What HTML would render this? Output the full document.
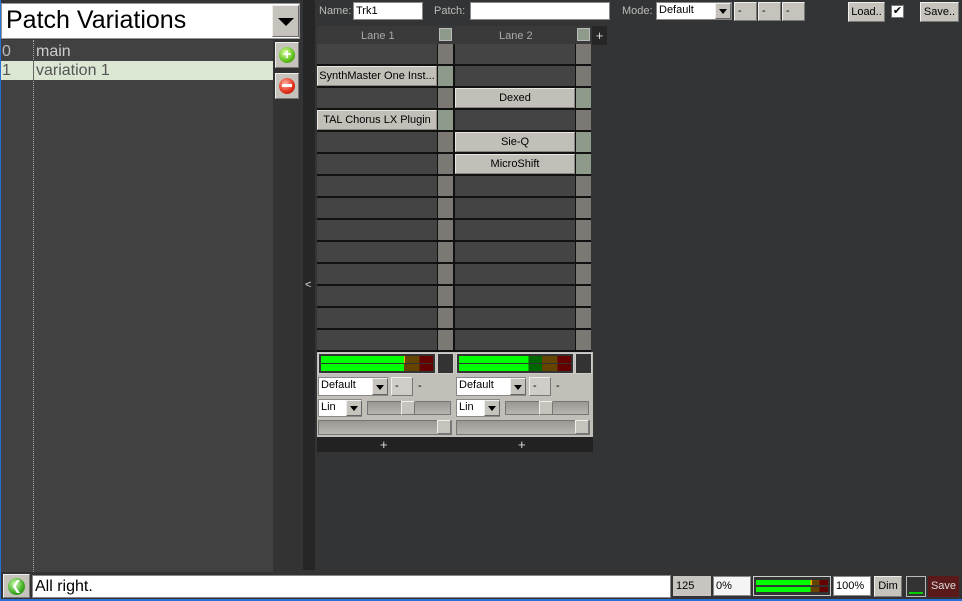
<!DOCTYPE html><html><head><style>
*{margin:0;padding:0;box-sizing:border-box}
body{width:962px;height:601px;background:#333435;font-family:"Liberation Sans","DejaVu Sans",sans-serif;position:relative;overflow:hidden;font-size:11px}
.a{position:absolute}
.slot{position:absolute;height:20px;background:#444;}
.side{position:absolute;width:15px;height:20px;background:#7c7874}
.sideg{background:#8e9b8a}
.plug{position:absolute;height:20px;background:#c2bfb9;border:1px solid #e8e6e0;border-right-color:#8a8782;border-bottom-color:#8a8782;color:#000;text-align:center;line-height:18px;font-size:11px;white-space:nowrap;overflow:hidden}
.lbl{color:#bbb;font-size:11px}
.inp{background:#fff;border:1px solid #888;color:#000;font-size:11px;padding-left:2px;line-height:16px}
.btn{background:#c6c3bd;border:1px solid #eee;border-right-color:#777;border-bottom-color:#777;color:#000;font-size:11px;text-align:center}
.dd{background:#c6c3bd;border:1px solid #eee;border-right-color:#666;border-bottom-color:#666}
.dd:after{content:"";position:absolute;left:50%;top:50%;margin:-2px 0 0 -4px;border:4px solid transparent;border-top:5px solid #000;border-bottom:0}
.big:after{margin:-3px 0 0 -8px;border-width:8px;border-top-width:8px;border-bottom:0}
</style></head><body>
<div class="a" style="left:0;top:0;width:1px;height:601px;background:#2a6fd6"></div>
<div class="a" style="left:0;top:599px;width:962px;height:2px;background:#2a6fd6"></div>
<div class="a" style="left:1px;top:40px;width:272px;height:532px;background:#414141"></div>
<div class="a" style="left:33px;top:40px;width:0;height:532px;border-left:1px dotted #aaa"></div>
<div class="a" style="left:273px;top:40px;width:27px;height:532px;background:#333"></div>
<div class="a" style="left:303px;top:0;width:12px;height:570px;background:#262626"></div>
<div class="a" style="left:305px;top:279px;color:#ddd;font-size:11px">&lt;</div>
<div class="a" style="left:1px;top:3px;width:299px;height:36px;background:#fff;border:1px solid #999"></div>
<div class="a" style="left:6px;top:6px;font-size:25px;color:#000">Patch Variations</div>
<div class="a dd big" style="left:272px;top:5px;width:27px;height:32px"></div>
<div class="a" style="left:2px;top:43px;font-size:16px;color:#bbb">0</div>
<div class="a" style="left:36px;top:43px;font-size:16px;color:#ccc">main</div>
<div class="a" style="left:1px;top:61px;width:272px;height:19px;background:#dbe6d3"></div>
<div class="a" style="left:33px;top:61px;width:1px;height:19px;background:#666"></div>
<div class="a" style="left:2px;top:62px;font-size:16px;color:#555">1</div>
<div class="a" style="left:36px;top:62px;font-size:16px;color:#555">variation 1</div>
<div class="a btn" style="left:275px;top:42px;width:24px;height:26px"><div class="a" style="left:3px;top:4px;width:16px;height:16px;border-radius:50%;background:radial-gradient(circle at 40% 35%,#dfffa0,#5cbf1a 60%,#2e7a0a);color:#fff;font-weight:bold;font-size:15px;line-height:15px;text-align:center">+</div></div>
<div class="a btn" style="left:275px;top:73px;width:24px;height:26px"><div class="a" style="left:3px;top:4px;width:16px;height:16px;border-radius:50%;background:radial-gradient(circle at 40% 35%,#ffb0a0,#e0301a 60%,#901005);"><div class="a" style="left:3px;top:6px;width:10px;height:3px;background:#fff"></div></div></div>
<div class="a lbl" style="left:319px;top:5px">Name:</div>
<div class="a inp" style="left:353px;top:2px;width:70px;height:18px">Trk1</div>
<div class="a lbl" style="left:434px;top:5px">Patch:</div>
<div class="a inp" style="left:470px;top:2px;width:140px;height:18px"></div>
<div class="a lbl" style="left:622px;top:5px">Mode:</div>
<div class="a inp" style="left:656px;top:2px;width:76px;height:18px;line-height:14px">Default</div>
<div class="a dd" style="left:715px;top:3px;width:16px;height:16px"></div>
<div class="a btn" style="left:734px;top:2px;width:23px;height:19px;text-align:left;padding-left:3px;line-height:17px">-</div>
<div class="a btn" style="left:758px;top:2px;width:23px;height:19px;text-align:left;padding-left:3px;line-height:17px">-</div>
<div class="a btn" style="left:782px;top:2px;width:23px;height:19px;text-align:left;padding-left:3px;line-height:17px">-</div>
<div class="a btn" style="left:848px;top:2px;width:37px;height:20px;line-height:18px">Load..</div>
<div class="a" style="left:891px;top:5px;width:13px;height:13px;background:#fff;border:1px solid #777;font-size:11px;line-height:11px;text-align:center">✔</div>
<div class="a btn" style="left:920px;top:2px;width:39px;height:20px;line-height:18px">Save..</div>
<div class="a" style="left:317px;top:26px;width:274px;height:18px;background:#3a3a3a"></div>
<div class="a lbl" style="left:361px;top:30px;color:#aaa">Lane 1</div>
<div class="a lbl" style="left:499px;top:30px;color:#aaa">Lane 2</div>
<div class="a" style="left:439px;top:28px;width:13px;height:13px;background:#8e9b8a;border:1px solid #bbb"></div>
<div class="a" style="left:577px;top:28px;width:13px;height:13px;background:#8e9b8a;border:1px solid #bbb"></div>
<div class="a" style="left:592px;top:26px;width:15px;height:19px;background:#262626;color:#ddd;font-size:13px;text-align:center;line-height:19px">+</div>
<div class="a" style="left:317px;top:44px;width:274px;height:308px;background:#111"></div>
<div id="rows"></div>
<script>
var h='';for(var i=0;i<14;i++){var y=44+i*22;
h+='<div class="slot" style="left:317px;top:'+y+'px;width:120px"></div><div class="side'+((i==1||i==3)?' sideg':'')+'" style="left:438px;top:'+y+'px"></div>';
h+='<div class="slot" style="left:455px;top:'+y+'px;width:120px"></div><div class="side'+((i==2||i==4||i==5)?' sideg':'')+'" style="left:576px;top:'+y+'px"></div>';}
document.getElementById('rows').innerHTML=h;
</script>
<div class="plug" style="left:317px;top:66px;width:120px">SynthMaster One Inst...</div>
<div class="plug" style="left:317px;top:110px;width:120px">TAL Chorus LX Plugin</div>
<div class="plug" style="left:455px;top:88px;width:120px">Dexed</div>
<div class="plug" style="left:455px;top:132px;width:120px">Sie-Q</div>
<div class="plug" style="left:455px;top:154px;width:120px">MicroShift</div>
<div class="a" style="left:317px;top:352px;width:276px;height:85px;background:#c2bfb9"></div>
<div class="a" style="left:318px;top:353px;width:118px;height:21px;background:#333;border:1px solid #ccc"></div>
<div class="a" style="left:321px;top:356px;width:112px;height:7px;background:linear-gradient(90deg,#0f0 0 74%,#fa0 74% 75%,#654400 75% 88%,#600 88%)"></div>
<div class="a" style="left:321px;top:364px;width:112px;height:7px;background:linear-gradient(90deg,#0f0 0 74%,#654400 74% 88%,#600 88%)"></div>
<div class="a" style="left:437px;top:353px;width:17px;height:21px;background:#333;border:1px solid #ccc"></div>
<div class="a" style="left:456px;top:353px;width:118px;height:21px;background:#333;border:1px solid #ccc"></div>
<div class="a" style="left:459px;top:356px;width:112px;height:7px;background:linear-gradient(90deg,#0f0 0 62%,#060 62% 74%,#654400 74% 88%,#600 88%)"></div>
<div class="a" style="left:459px;top:364px;width:112px;height:7px;background:linear-gradient(90deg,#0f0 0 62%,#060 62% 74%,#654400 74% 88%,#600 88%)"></div>
<div class="a" style="left:575px;top:353px;width:17px;height:21px;background:#333;border:1px solid #ccc"></div>
<div class="a inp" style="left:318px;top:377px;width:70px;height:19px;line-height:15px">Default</div>
<div class="a dd" style="left:372px;top:378px;width:16px;height:17px"></div>
<div class="a btn" style="left:391px;top:377px;width:22px;height:19px;text-align:left;padding-left:3px;background:#d0cdc8;line-height:17px">-</div>
<div class="a" style="left:418px;top:380px">-</div>
<div class="a inp" style="left:456px;top:377px;width:70px;height:19px;line-height:15px">Default</div>
<div class="a dd" style="left:510px;top:378px;width:16px;height:17px"></div>
<div class="a btn" style="left:529px;top:377px;width:22px;height:19px;text-align:left;padding-left:3px;background:#d0cdc8;line-height:17px">-</div>
<div class="a" style="left:556px;top:380px">-</div>
<div class="a inp" style="left:318px;top:399px;width:44px;height:18px;line-height:14px">Lin</div>
<div class="a dd" style="left:346px;top:400px;width:16px;height:16px"></div>
<div class="a" style="left:367px;top:401px;width:84px;height:14px;background:linear-gradient(#9a9893,#b8b5b0);border:1px solid #777"></div>
<div class="a btn" style="left:401px;top:401px;width:14px;height:14px"></div>
<div class="a inp" style="left:456px;top:399px;width:44px;height:18px;line-height:14px">Lin</div>
<div class="a dd" style="left:484px;top:400px;width:16px;height:16px"></div>
<div class="a" style="left:505px;top:401px;width:84px;height:14px;background:linear-gradient(#9a9893,#b8b5b0);border:1px solid #777"></div>
<div class="a btn" style="left:539px;top:401px;width:14px;height:14px"></div>
<div class="a" style="left:318px;top:420px;width:134px;height:15px;background:linear-gradient(#9a9893,#b8b5b0);border:1px solid #777"></div>
<div class="a btn" style="left:437px;top:420px;width:14px;height:14px"></div>
<div class="a" style="left:456px;top:420px;width:134px;height:15px;background:linear-gradient(#9a9893,#b8b5b0);border:1px solid #777"></div>
<div class="a btn" style="left:575px;top:420px;width:14px;height:14px"></div>
<div class="a" style="left:317px;top:437px;width:276px;height:15px;background:#222;color:#ddd;font-size:13px;line-height:15px"><span class="a" style="left:63px">+</span><span class="a" style="left:201px">+</span></div>
<div class="a" style="left:1px;top:572px;width:961px;height:27px;background:#333"></div>
<div class="a btn" style="left:3px;top:574px;width:27px;height:24px"><div class="a" style="left:4px;top:3px;width:17px;height:17px;border-radius:50%;background:radial-gradient(circle at 40% 35%,#cfffb0,#3caa20 60%,#1e6a08);color:#fff;font-weight:bold;font-size:13px;line-height:16px;text-align:center">&#x276E;</div></div>
<div class="a" style="left:32px;top:575px;width:639px;height:23px;background:#fff;border:1px solid #888;font-size:16px;color:#000;padding-left:2px;line-height:21px">All right.</div>
<div class="a" style="left:673px;top:576px;width:38px;height:20px;background:#c8c5c0;font-size:11px;line-height:20px;padding-left:3px">125</div>
<div class="a inp" style="left:713px;top:576px;width:38px;height:20px;line-height:18px;background:#f4f4f4">0%</div>
<div class="a" style="left:753px;top:576px;width:78px;height:20px;background:#333;border:1px solid #ccc"></div>
<div class="a" style="left:756px;top:580px;width:72px;height:5px;background:linear-gradient(90deg,#0f0 0 76%,#fa0 76% 78%,#654400 78% 88%,#600 88%)"></div>
<div class="a" style="left:756px;top:587px;width:72px;height:5px;background:linear-gradient(90deg,#0f0 0 76%,#654400 76% 88%,#600 88%)"></div>
<div class="a inp" style="left:833px;top:576px;width:38px;height:20px;line-height:18px">100%</div>
<div class="a btn" style="left:874px;top:576px;width:28px;height:21px;line-height:19px">Dim</div>
<div class="a" style="left:906px;top:576px;width:20px;height:21px;background:#333;border:1px solid #bbb"><div class="a" style="left:2px;bottom:2px;width:14px;height:2px;background:#0c0"></div></div>
<div class="a" style="left:928px;top:576px;width:31px;height:21px;background:#5a1a1a;color:#ddd;line-height:21px;text-align:center">Save</div>
</body></html>
